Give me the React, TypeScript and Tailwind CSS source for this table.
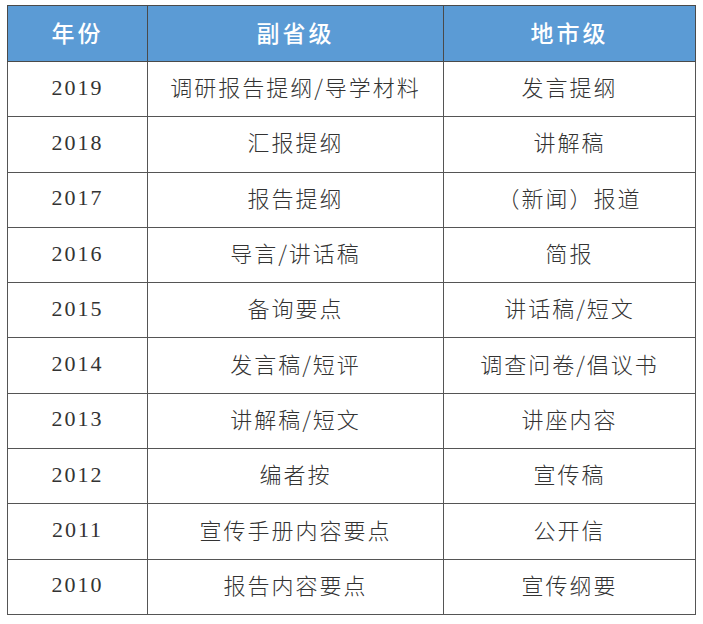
const rows: [string, string, string][] = [
  ['2019', '调研报告提纲/导学材料', '发言提纲'],
  ['2018', '汇报提纲', '讲解稿'],
  ['2017', '报告提纲', '（新闻）报道'],
  ['2016', '导言/讲话稿', '简报'],
  ['2015', '备询要点', '讲话稿/短文'],
  ['2014', '发言稿/短评', '调查问卷/倡议书'],
  ['2013', '讲解稿/短文', '讲座内容'],
  ['2012', '编者按', '宣传稿'],
  ['2011', '宣传手册内容要点', '公开信'],
  ['2010', '报告内容要点', '宣传纲要'],
]

const cjk = "font-['Noto_Sans_CJK_SC',sans-serif]"

export default function App() {
  return (
    <div className="w-[703px] h-[624px] bg-white pt-[5px] pl-[7px]">
      <table className="border-collapse table-fixed w-[688px] text-center">
        <colgroup>
          <col className="w-[140px]" />
          <col className="w-[296px]" />
          <col className="w-[252px]" />
        </colgroup>
        <thead>
          <tr className={`h-[56px] bg-[#5b9bd5] text-white text-[23px] tracking-[3px] ${cjk}`}>
            <th className="border border-[#4a4a4a] font-medium pb-[3px]">年份</th>
            <th className="border border-[#4a4a4a] font-medium pb-[3px]">副省级</th>
            <th className="border border-[#4a4a4a] font-medium pb-[3px]">地市级</th>
          </tr>
        </thead>
        <tbody className="text-[#333] text-[22px] tracking-[2px]">
          {rows.map(([year, a, b]) => (
            <tr key={year} className="h-[55.3px]">
              <td className="border border-[#555] pb-[4px] font-['Liberation_Serif',serif]">{year}</td>
              <td className={`border border-[#555] pb-[5px] font-light ${cjk}`}>{a}</td>
              <td className={`border border-[#555] pb-[5px] font-light ${cjk}`}>{b}</td>
            </tr>
          ))}
        </tbody>
      </table>
    </div>
  )
}
